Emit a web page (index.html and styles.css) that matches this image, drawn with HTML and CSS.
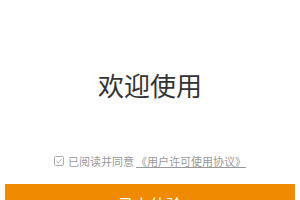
FILE: index.html
```html
<!DOCTYPE html>
<html lang="zh-CN">

<head>
    <meta charset="UTF-8">
    <meta name="viewport" content="width=device-width, initial-scale=1.0">
    <title>欢迎使用</title>
    <link rel="stylesheet" href="styles.css">
</head>

<body>
    <div class="welcome">
        <h1 class="title">欢迎使用</h1>
        <div class="agree">
            <svg class="check" width="10" height="10" viewBox="0 0 10 10">
                <rect x="0.5" y="0.5" width="9" height="9" rx="1" fill="none" stroke="#aaa" stroke-width="1"/>
                <path d="M2.4 5.1 L4.2 6.8 L7.6 3.2" fill="none" stroke="#aaa" stroke-width="1"/>
            </svg>
            <span>已阅读并同意</span>
            <a class="link" href="#">《用户许可使用协议》</a>
        </div>
        <div class="btn">马上体验</div>
    </div>
</body>

</html>
```
FILE: styles.css
```css
* {
    margin: 0;
    padding: 0;
}

body {
    background-color: #fff;
    font-family: "Noto Sans CJK SC", "Liberation Sans", sans-serif;
}

.welcome {
    padding-top: 70px;
}

.title {
    height: 30px;
    line-height: 30px;
    font-size: 26px;
    font-weight: normal;
    color: #333;
    text-align: center;
}

.agree {
    display: flex;
    justify-content: center;
    align-items: center;
    margin-top: 53px;
    height: 16px;
    font-size: 11px;
    color: #999;
}

.check {
    margin-right: 4px;
}

.link {
    margin-left: 2px;
    color: #999;
    text-decoration: underline;
}

.btn {
    margin: 15px 5px 0;
    height: 40px;
    line-height: 40px;
    background-color: #f08a00;
    color: #fff;
    font-size: 16px;
    text-align: center;
}
```
